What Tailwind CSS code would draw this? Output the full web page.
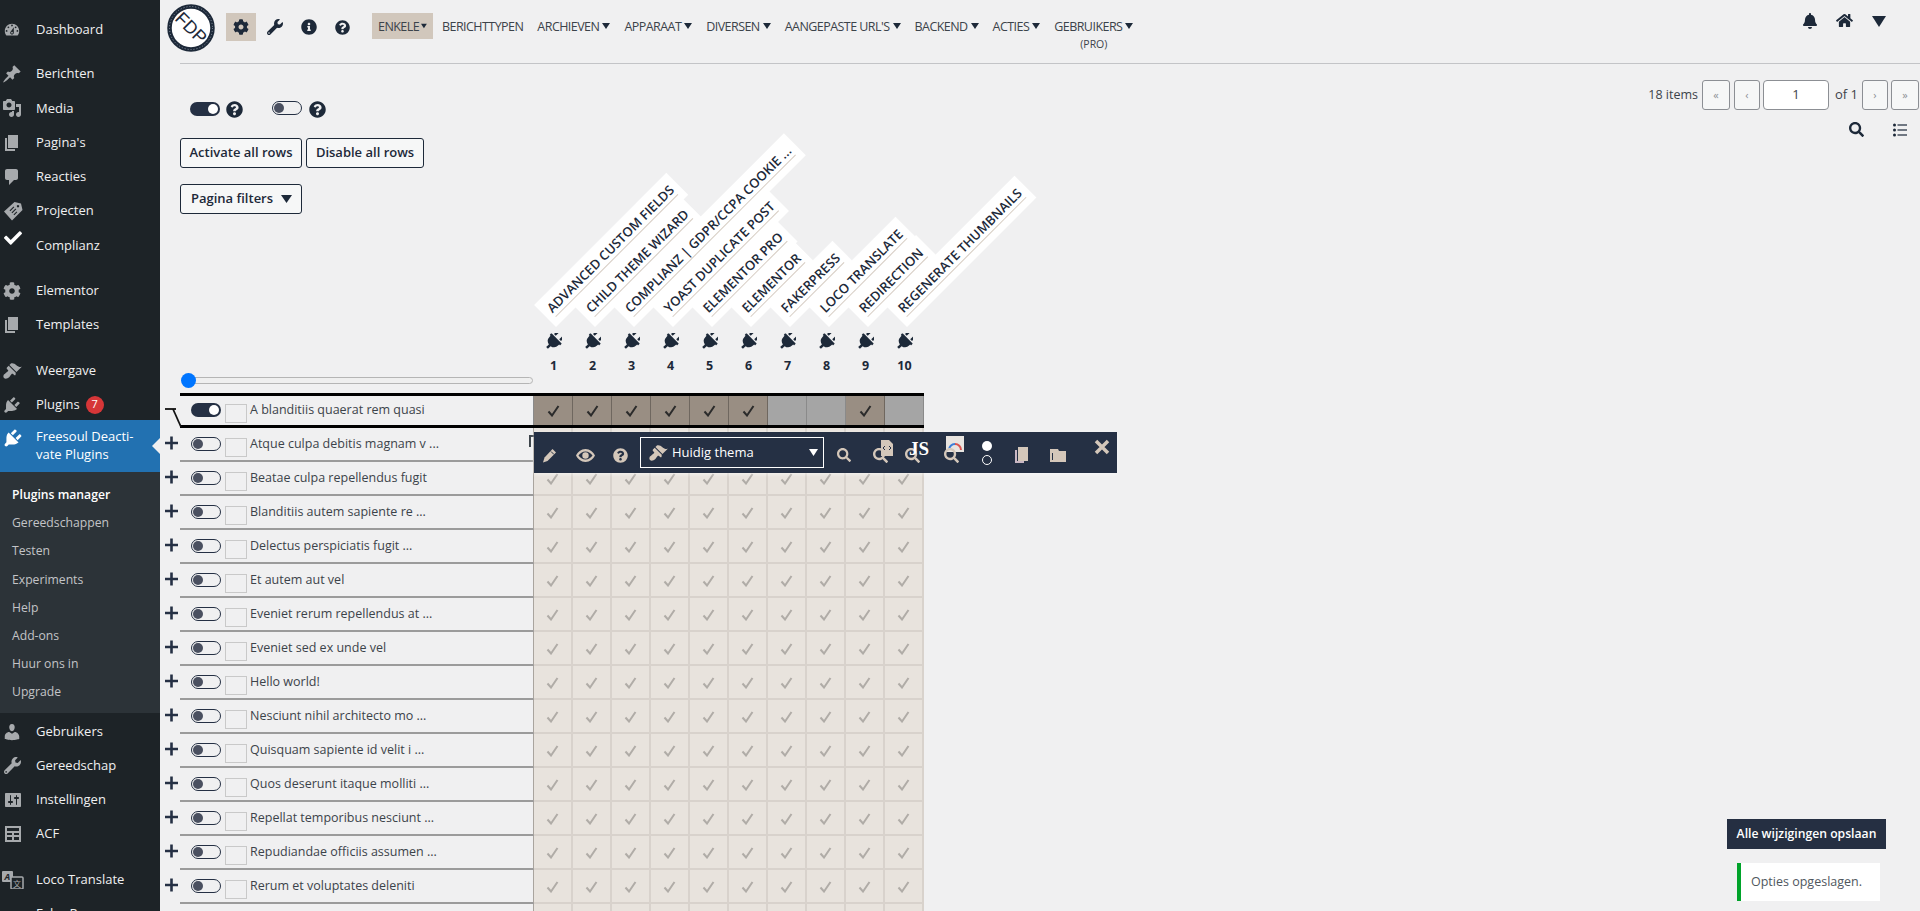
<!DOCTYPE html>
<html lang="nl">
<head>
  <meta charset="UTF-8" />
  <title>Freesoul Deactivate Plugins</title>
  <script src="https://cdn.jsdelivr.net/npm/@tailwindcss/browser@4"></script>
</head>
<body class="h-[911px] w-[1920px] overflow-hidden flex bg-[#f0f0f1] font-['Open_Sans',sans-serif] text-[13px] text-[#3c434a]">

  <svg class="hidden">
    <symbol id="plug" viewBox="48 48 416 416"><g transform="rotate(45 256 256) translate(64 0)"><path d="M320,32a32,32,0,0,0-64,0v96h64Zm48,128H16A16,16,0,0,0,0,176v32a16,16,0,0,0,16,16H32v32A160.07,160.07,0,0,0,160,412.8V512h64V412.8A160.07,160.07,0,0,0,352,256V224h16a16,16,0,0,0,16-16V176A16,16,0,0,0,368,160ZM128,32a32,32,0,0,0-64,0v96h64Z"/></g></symbol>
    <symbol id="cog" viewBox="0 0 512 512"><path d="M487.4 315.7l-42.6-24.6c4.3-23.2 4.3-47 0-70.2l42.6-24.6c4.9-2.8 7.1-8.6 5.5-14-11.1-35.6-30-67.8-54.7-94.6-3.8-4.1-10-5.1-14.8-2.3L380.8 110c-17.9-15.4-38.5-27.3-60.8-35.1V25.8c0-5.6-3.9-10.5-9.4-11.7-36.7-8.2-74.3-7.8-109.2 0-5.5 1.2-9.4 6.1-9.4 11.7V75c-22.2 7.9-42.8 19.8-60.8 35.1L88.7 85.5c-4.9-2.8-11-1.9-14.8 2.3-24.7 26.7-43.6 58.9-54.7 94.6-1.7 5.4.6 11.2 5.5 14L67.3 221c-4.3 23.2-4.3 47 0 70.2l-42.6 24.6c-4.9 2.8-7.1 8.6-5.5 14 11.1 35.6 30 67.8 54.7 94.6 3.8 4.1 10 5.1 14.8 2.3l42.6-24.6c17.9 15.4 38.5 27.3 60.8 35.1v49.2c0 5.6 3.9 10.5 9.4 11.7 36.7 8.2 74.3 7.8 109.2 0 5.5-1.2 9.4-6.1 9.4-11.7v-49.2c22.2-7.9 42.8-19.8 60.8-35.1l42.6 24.6c4.9 2.8 11 1.9 14.8-2.3 24.7-26.7 43.6-58.9 54.7-94.6 1.5-5.5-.7-11.3-5.6-14.1zM256 336c-44.1 0-80-35.9-80-80s35.9-80 80-80 80 35.9 80 80-35.9 80-80 80z"/></symbol>
    <symbol id="wrench" viewBox="0 0 512 512"><path d="M507.73 109.1c-2.24-9.03-13.54-12.09-20.12-5.51l-74.36 74.36-67.88-11.31-11.31-67.88 74.36-74.36c6.62-6.62 3.43-17.9-5.66-20.16-47.38-11.74-99.55.91-136.58 37.93-39.64 39.64-50.55 97.1-34.05 147.2L18.74 402.76c-24.99 24.99-24.99 65.51 0 90.5 24.99 24.99 65.51 24.99 90.5 0l213.21-213.21c50.12 16.71 107.47 5.68 147.37-34.22 37.07-37.07 49.7-89.32 37.91-136.73zM64 472c-13.25 0-24-10.75-24-24 0-13.26 10.75-24 24-24s24 10.74 24 24c0 13.25-10.75 24-24 24z"/></symbol>
    <symbol id="info" viewBox="0 0 512 512"><path d="M256 8C119.043 8 8 119.083 8 256c0 136.997 111.043 248 248 248s248-111.003 248-248C504 119.083 392.957 8 256 8zm0 110c23.196 0 42 18.804 42 42s-18.804 42-42 42-42-18.804-42-42 18.804-42 42-42zm56 254c0 6.627-5.373 12-12 12h-88c-6.627 0-12-5.373-12-12v-24c0-6.627 5.373-12 12-12h12v-64h-12c-6.627 0-12-5.373-12-12v-24c0-6.627 5.373-12 12-12h64c6.627 0 12 5.373 12 12v100h12c6.627 0 12 5.373 12 12v24z"/></symbol>
    <symbol id="help" viewBox="0 0 512 512"><path d="M504 256c0 136.997-111.043 248-248 248S8 392.997 8 256C8 119.083 119.043 8 256 8s248 111.083 248 248zM262.655 90c-54.497 0-89.255 22.957-116.549 63.758-3.536 5.286-2.353 12.415 2.715 16.258l34.699 26.31c5.205 3.947 12.621 3.008 16.665-2.122 17.864-22.658 30.113-35.797 57.303-35.797 20.429 0 45.698 13.148 45.698 32.958 0 14.976-12.363 22.667-32.534 33.976C247.128 238.528 216 254.941 216 296v4c0 6.627 5.373 12 12 12h56c6.627 0 12-5.373 12-12v-1.333c0-28.462 83.186-29.647 83.186-106.667 0-58.002-60.165-102-116.531-102zM256 338c-25.365 0-46 20.635-46 46 0 25.364 20.635 46 46 46s46-20.636 46-46c0-25.365-20.635-46-46-46z"/></symbol>
    <symbol id="search" viewBox="0 0 512 512"><path d="M505 442.7L405.3 343c-4.5-4.5-10.6-7-17-7H372c27.6-35.3 44-79.7 44-128C416 93.1 322.9 0 208 0S0 93.1 0 208s93.1 208 208 208c48.3 0 92.7-16.4 128-44v16.3c0 6.4 2.5 12.5 7 17l99.7 99.7c9.4 9.4 24.6 9.4 33.9 0l28.3-28.3c9.4-9.4 9.4-24.6.1-34zM208 336c-70.7 0-128-57.2-128-128 0-70.7 57.2-128 128-128 70.7 0 128 57.2 128 128 0 70.7-57.2 128-128 128z"/></symbol>
    <symbol id="bell" viewBox="0 0 448 512"><path d="M224 512c35.32 0 63.97-28.65 63.97-64H160.03c0 35.35 28.65 64 63.97 64zm215.39-149.71c-19.32-20.76-55.47-51.99-55.47-154.29 0-77.7-54.48-139.9-127.94-155.16V32c0-17.67-14.32-32-31.98-32s-31.98 14.33-31.98 32v20.84C118.56 68.1 64.08 130.3 64.08 208c0 102.3-36.15 133.53-55.47 154.29-6 6.45-8.66 14.16-8.61 21.71.11 16.4 12.98 32 32.1 32h383.8c19.12 0 32-15.6 32.1-32 .05-7.55-2.61-15.27-8.61-21.71z"/></symbol>
    <symbol id="home" viewBox="0 0 576 512"><path d="M280.37 148.26L96 300.11V464a16 16 0 0 0 16 16l112.06-.29a16 16 0 0 0 15.92-16V368a16 16 0 0 1 16-16h64a16 16 0 0 1 16 16v95.64a16 16 0 0 0 16 16.05L464 480a16 16 0 0 0 16-16V300L295.67 148.26a12.19 12.19 0 0 0-15.3 0zM571.6 251.47L488 182.56V44.05a12 12 0 0 0-12-12h-56a12 12 0 0 0-12 12v72.61L318.47 43a48 48 0 0 0-61 0L4.34 251.47a12 12 0 0 0-1.6 16.9l25.5 31A12 12 0 0 0 45.15 301l235.22-193.74a12.19 12.19 0 0 1 15.3 0L530.9 301a12 12 0 0 0 16.9-1.6l25.5-31a12 12 0 0 0-1.7-16.93z"/></symbol>
    <symbol id="check" viewBox="0 0 512 512"><path d="M173.898 439.404l-166.4-166.4c-9.997-9.997-9.997-26.206 0-36.204l36.203-36.204c9.997-9.998 26.207-9.998 36.204 0L192 312.69 432.095 72.596c9.997-9.997 26.207-9.997 36.204 0l36.203 36.204c9.997 9.997 9.997 26.206 0 36.204l-294.4 294.401c-9.998 9.997-26.207 9.997-36.204-.001z"/></symbol>
    <symbol id="gauge" viewBox="0 0 20 20"><path d="M3.76 16h12.48c1.1-1.37 1.76-3.11 1.76-5 0-4.42-3.58-8-8-8s-8 3.58-8 8c0 1.89.66 3.63 1.76 5zM10 4c.55 0 1 .45 1 1s-.45 1-1 1-1-.45-1-1 .45-1 1-1zM6 6c.55 0 1 .45 1 1s-.45 1-1 1-1-.45-1-1 .45-1 1-1zm8 0c.55 0 1 .45 1 1s-.45 1-1 1-1-.45-1-1 .45-1 1-1zm-5.37 5.55L12 7v6c0 1.1-.9 2-2 2s-2-.9-2-2c0-.57.24-1.08.63-1.45zM4 10c.55 0 1 .45 1 1s-.45 1-1 1-1-.45-1-1 .45-1 1-1zm12 0c.55 0 1 .45 1 1s-.45 1-1 1-1-.45-1-1 .45-1 1-1zm-5 3c0-.55-.45-1-1-1s-1 .45-1 1 .45 1 1 1 1-.45 1-1z"/></symbol>
    <symbol id="pin" viewBox="0 0 20 20"><path d="M10.44 3.02l1.82-1.82 6.36 6.35-1.83 1.82c-1.05-.68-2.48-.57-3.41.36l-.75.75c-.92.93-1.04 2.35-.35 3.41l-1.83 1.82-2.41-2.41-2.8 2.79c-.42.42-3.38 2.71-3.8 2.29s1.86-3.39 2.28-3.81l2.79-2.79L4.1 9.36l1.83-1.82c1.05.69 2.48.57 3.4-.36l.75-.75c.93-.92 1.05-2.35.36-3.41z"/></symbol>
    <symbol id="media" viewBox="0 0 20 20"><path d="M13 11V4c0-.55-.45-1-1-1h-1.67L9 1H5L3.67 3H2c-.55 0-1 .45-1 1v7c0 .55.45 1 1 1h10c.55 0 1-.45 1-1zM7 4.5c1.38 0 2.5 1.12 2.5 2.5S8.38 9.5 7 9.5 4.5 8.38 4.5 7 5.62 4.5 7 4.5zM14 6h5v10.5c0 1.38-1.12 2.5-2.5 2.5S14 17.88 14 16.5s1.12-2.5 2.5-2.5c.17 0 .34.02.5.05V9h-3V6zm-4 8.05V13h2v3.5c0 1.38-1.12 2.5-2.5 2.5S7 17.88 7 16.5 8.12 14 9.5 14c.17 0 .34.02.5.05z"/></symbol>
    <symbol id="page" viewBox="0 0 20 20"><path d="M6 15V2h10v13H6zm-1 1h8v2H3V5h2v11z"/></symbol>
    <symbol id="comment" viewBox="0 0 20 20"><path d="M5 2h9c1.1 0 2 .9 2 2v7c0 1.1-.9 2-2 2h-2l-5 5v-5H5c-1.1 0-2-.9-2-2V4c0-1.1.9-2 2-2z"/></symbol>
    <symbol id="tag" viewBox="0 0 20 20"><path fill-rule="evenodd" d="M1 10.5 11.5 1l6.5 1.5L19.5 9 9 19.5zM15 4a1.2 1.2 0 1 0 .01 0zM6.5 9.5l.8.8 4-4-.8-.8zM8.5 11.5l.8.8 4-4-.8-.8zM10.500 13.500l.8.8 3-3-.8-.8z"/></symbol>
    <symbol id="brush" viewBox="0 0 20 20"><path d="M14.48 11.06L7.41 3.99l1.5-1.5c.5-.56 2.3-.47 3.51.32 1.21.8 1.43 1.28 2.91 2.1 1.18.64 2.45 1.26 4.45.85zm-.71.71L6.7 4.7 4.93 6.47c-.39.39-.39 1.02 0 1.41l1.06 1.06c.39.39.39 1.03 0 1.42-.6.6-1.43 1.11-2.21 1.69-.35.26-.7.53-1.01.84C1.43 13.23.78 15.78 2 17s3.77.57 5.12-.78c.31-.31.58-.66.84-1.01.58-.78 1.09-1.61 1.69-2.21.39-.39 1.03-.39 1.42 0l1.06 1.06c.39.39 1.02.39 1.41 0z"/></symbol>
    <symbol id="wpplug" viewBox="0 0 20 20"><path d="M13.11 4.36L9.87 7.6 8 5.73l3.24-3.24c.35-.34 1.05-.2 1.56.32.52.51.66 1.21.31 1.55zm-8 1.77l.91-1.12 9.01 9.01-1.19.84c-.71.71-2.63 1.16-3.82 1.16H6.14L4.9 17.26c-.59.59-1.54.59-2.12 0-.59-.58-.59-1.53 0-2.12l1.24-1.24v-3.88c0-1.13.4-3.19 1.09-3.89zm7.26 3.97l3.24-3.24c.34-.35 1.04-.21 1.55.31.52.51.66 1.21.31 1.55l-3.24 3.25z"/></symbol>
    <symbol id="users" viewBox="0 0 20 20"><path d="M10 9.25c-2.27 0-2.73-3.44-2.73-3.44C7 4.02 7.82 2 9.97 2c2.16 0 2.98 2.02 2.71 3.81 0 0-.41 3.44-2.68 3.44zm0 2.57L12.72 10c2.39 0 4.52 2.33 4.52 4.53v2.49s-3.65 1.13-7.24 1.13c-3.65 0-7.24-1.13-7.24-1.13v-2.49c0-2.25 1.94-4.48 4.47-4.48z"/></symbol>
    <symbol id="sliders" viewBox="0 0 20 20"><path d="M18 16V4c0-.55-.45-1-1-1H3c-.55 0-1 .45-1 1v12c0 .55.45 1 1 1h14c.55 0 1-.45 1-1zM8 11h1c.55 0 1 .45 1 1s-.45 1-1 1H8v1.5c0 .28-.22.5-.5.5s-.5-.22-.5-.5V13H6c-.55 0-1-.45-1-1s.45-1 1-1h1V5.5c0-.28.22-.5.5-.5s.5.22.5.5V11zm5-2h-1c-.55 0-1-.45-1-1s.45-1 1-1h1V5.5c0-.28.22-.5.5-.5s.5.22.5.5V7h1c.55 0 1 .45 1 1s-.45 1-1 1h-1v5.5c0 .28-.22.5-.5.5s-.5-.22-.5-.5V9z"/></symbol>
    <symbol id="table" viewBox="0 0 20 20"><path fill-rule="evenodd" d="M2 2h16v16H2zM4 4v3h12V4zm0 5v2h5V9zm7 0v2h5V9zm-7 4v3h5v-3zm7 0v3h5v-3z"/></symbol>
  </svg>

  <!-- admin menu -->
  <aside class="w-[160px] h-[911px] shrink-0 bg-[#1d2327] overflow-hidden pt-[13px] text-[#f0f0f1]">
    <a class="flex items-center h-[34px]"><svg class="w-[18px] h-[18px] ml-[3px] mr-[15px] fill-[#a7aaad]"><use href="#gauge"/></svg>Dashboard</a>
    <a class="flex items-center h-[34px] mt-[10px]"><svg class="w-[20px] h-[20px] ml-[2px] mr-[14px] fill-[#a7aaad]"><use href="#pin"/></svg>Berichten</a>
    <a class="flex items-center h-[34.500px]"><svg class="w-[20px] h-[20px] ml-[2px] mr-[14px] fill-[#a7aaad]"><use href="#media"/></svg>Media</a>
    <a class="flex items-center h-[34.500px]"><svg class="w-[20px] h-[20px] ml-[2px] mr-[14px] fill-[#a7aaad]"><use href="#page"/></svg>Pagina's</a>
    <a class="flex items-center h-[34px]"><svg class="w-[20px] h-[20px] ml-[2px] mr-[14px] fill-[#a7aaad]"><use href="#comment"/></svg>Reacties</a>
    <a class="flex items-center h-[34px]"><svg class="w-[20px] h-[20px] ml-[3px] mr-[13px] fill-[#a7aaad]"><use href="#tag"/></svg>Projecten</a>
    <a class="flex items-center h-[34.500px]"><svg class="w-[18px] h-[18px] ml-[4px] mr-[14px] mt-[-14px] fill-white"><use href="#check"/></svg>Complianz</a>
    <a class="flex items-center h-[34px] mt-[11px]"><svg class="w-[18px] h-[18px] ml-[3px] mr-[15px] fill-[#a7aaad]"><use href="#cog"/></svg>Elementor</a>
    <a class="flex items-center h-[34px]"><svg class="w-[20px] h-[20px] ml-[2px] mr-[14px] fill-[#a7aaad]"><use href="#page"/></svg>Templates</a>
    <a class="flex items-center h-[34px] mt-[12px]"><svg class="w-[20px] h-[20px] ml-[2px] mr-[14px] fill-[#a7aaad]"><use href="#brush"/></svg>Weergave</a>
    <a class="flex items-center h-[34px]"><svg class="w-[20px] h-[20px] ml-[2px] mr-[14px] fill-[#a7aaad]"><use href="#wpplug"/></svg>Plugins<span class="ml-[6px] w-[18px] h-[18px] rounded-full bg-[#d63638] text-white text-[11px] flex items-center justify-center">7</span></a>
    <a class="relative flex h-[52px] bg-[#2271b1] text-white mt-[-1.500px]">
      <svg class="w-[22px] h-[22px] ml-[2px] mt-[7px] mr-[12px] fill-white shrink-0"><use href="#wpplug"/></svg>
      <span class="leading-[18px] pt-[7px]">Freesoul Deacti-<br>vate Plugins</span>
      <span class="absolute right-0 top-[18px] border-y-[8px] border-r-[8px] border-y-transparent border-r-[#f0f0f1]"></span>
    </a>
    <div class="bg-[#2c3338] pt-[9px] pb-[6px] text-[#c3c4c7] text-[12.200px]">
      <a class="flex items-center h-[28.200px] pl-[12px] font-semibold text-white">Plugins manager</a>
      <a class="flex items-center h-[28.200px] pl-[12px]">Gereedschappen</a>
      <a class="flex items-center h-[28.200px] pl-[12px]">Testen</a>
      <a class="flex items-center h-[28.200px] pl-[12px]">Experiments</a>
      <a class="flex items-center h-[28.200px] pl-[12px]">Help</a>
      <a class="flex items-center h-[28.200px] pl-[12px]">Add-ons</a>
      <a class="flex items-center h-[28.200px] pl-[12px]">Huur ons in</a>
      <a class="flex items-center h-[28.200px] pl-[12px]">Upgrade</a>
    </div>
    <a class="flex items-center h-[34px] mt-[2px]"><svg class="w-[20px] h-[20px] ml-[2px] mr-[14px] fill-[#a7aaad]"><use href="#users"/></svg>Gebruikers</a>
    <a class="flex items-center h-[34px]"><svg class="w-[17px] h-[17px] ml-[4px] mr-[15px] fill-[#a7aaad]"><use href="#wrench"/></svg>Gereedschap</a>
    <a class="flex items-center h-[34px]"><svg class="w-[20px] h-[20px] ml-[3px] mr-[13px] fill-[#a7aaad]"><use href="#sliders"/></svg>Instellingen</a>
    <a class="flex items-center h-[34.500px]"><svg class="w-[20px] h-[20px] ml-[3px] mr-[13px] fill-[#a7aaad]"><use href="#table"/></svg>ACF</a>
    <a class="flex items-center h-[34px] mt-[11.500px]">
      <svg class="w-[22px] h-[18px] ml-[2px] mr-[12px]" viewBox="0 0 22 18"><rect x="0" y="0" width="11" height="11" rx="1" fill="#a7aaad"/><text x="2.500" y="9" font-size="9" font-weight="700" font-style="italic" fill="#1d2327">A</text><rect x="9" y="6" width="12" height="12" rx="1" fill="#1d2327" stroke="#a7aaad" stroke-width="1.500"/><text x="11" y="15.500" font-size="8" fill="#a7aaad" font-family="Noto Sans CJK SC">文</text></svg>
      Loco Translate</a>
    <a class="flex items-center h-[34px] pl-[36px]">FakerPress</a>
  </aside>

  <main class="relative flex-1 h-[911px] overflow-hidden">
    <!-- top bar -->
    <header class="flex h-[63px] pl-[7px]">
      <svg class="w-[48px] h-[48px] mt-[4px] shrink-0" viewBox="0 0 48 48">
        <circle cx="24" cy="24" r="21.500" fill="#fff" stroke="#1d2939" stroke-width="4.500"/>
        <circle cx="24" cy="24" r="21.500" fill="none" stroke="#8d97a6" stroke-width="1" stroke-dasharray="1 2"/>
        <text x="24" y="30" text-anchor="middle" font-size="18" font-family="Liberation Sans" fill="#1d2939" transform="rotate(45 24 24)">FDP</text>
      </svg>
      <div class="ml-[11px] mt-[13px] w-[30px] h-[28px] bg-[#d1c7bc] flex items-center justify-center"><svg class="w-[16px] h-[16px] fill-[#1d2939]"><use href="#cog"/></svg></div>
      <div class="ml-[2.500px] mt-[13px] w-[33.500px] h-[28px] flex items-center justify-center"><svg class="w-[16px] h-[16px] fill-[#1d2939]"><use href="#wrench"/></svg></div>
      <div class="mt-[13px] w-[33.500px] h-[28px] flex items-center justify-center"><svg class="w-[16px] h-[16px] fill-[#1d2939]"><use href="#info"/></svg></div>
      <div class="mt-[13px] w-[33.500px] h-[28px] flex items-center justify-center"><svg class="w-[15px] h-[15px] fill-[#1d2939]"><use href="#help"/></svg></div>
      <nav class="ml-[13px] mt-[13px] flex items-start gap-[14px] text-[12.500px] leading-[26px] tracking-[-0.55px] text-[#3c434a]">
        <a class="flex items-center h-[26px] pt-[2px] px-[6px] w-[61px] bg-[#d1c7bc] mr-[-5px]">ENKELE<svg class="w-[8px] h-[6px] ml-[2px] mb-[2px] fill-[#1d2939]" viewBox="0 0 8 6"><path d="M0 0h8L4 6z"/></svg></a>
        <a class="flex items-center h-[26px] pt-[2px]">BERICHTTYPEN</a>
        <a class="flex items-center h-[26px] pt-[2px]">ARCHIEVEN<svg class="w-[8px] h-[6px] ml-[3px] mb-[2px] fill-[#1d2939]" viewBox="0 0 8 6"><path d="M0 0h8L4 6z"/></svg></a>
        <a class="flex items-center h-[26px] pt-[2px]">APPARAAT<svg class="w-[8px] h-[6px] ml-[3px] mb-[2px] fill-[#1d2939]" viewBox="0 0 8 6"><path d="M0 0h8L4 6z"/></svg></a>
        <a class="flex items-center h-[26px] pt-[2px]">DIVERSEN<svg class="w-[8px] h-[6px] ml-[3px] mb-[2px] fill-[#1d2939]" viewBox="0 0 8 6"><path d="M0 0h8L4 6z"/></svg></a>
        <a class="flex items-center h-[26px] pt-[2px]">AANGEPASTE URL'S<svg class="w-[8px] h-[6px] ml-[3px] mb-[2px] fill-[#1d2939]" viewBox="0 0 8 6"><path d="M0 0h8L4 6z"/></svg></a>
        <a class="flex items-center h-[26px] pt-[2px]">BACKEND<svg class="w-[8px] h-[6px] ml-[3px] mb-[2px] fill-[#1d2939]" viewBox="0 0 8 6"><path d="M0 0h8L4 6z"/></svg></a>
        <a class="flex items-center h-[26px] pt-[2px]">ACTIES<svg class="w-[8px] h-[6px] ml-[3px] mb-[2px] fill-[#1d2939]" viewBox="0 0 8 6"><path d="M0 0h8L4 6z"/></svg></a>
        <a class="flex flex-col items-center">
          <span class="flex items-center h-[26px] pt-[2px]">GEBRUIKERS<svg class="w-[8px] h-[6px] ml-[3px] mb-[2px] fill-[#1d2939]" viewBox="0 0 8 6"><path d="M0 0h8L4 6z"/></svg></span>
          <span class="leading-[11px] text-[10.500px] tracking-normal">(PRO)</span>
        </a>
      </nav>
      <div class="ml-auto mr-[34px] mt-[13px] flex items-start gap-[19px] fill-[#1d2939]">
        <svg class="w-[14px] h-[16px]"><use href="#bell"/></svg>
        <svg class="w-[17px] h-[15px]"><use href="#home"/></svg>
        <svg class="w-[14px] h-[11px] mt-[3px]" viewBox="0 0 14 11"><path d="M0 0h14L7 11z"/></svg>
      </div>
    </header>
    <div class="ml-[20px] h-px bg-[#c3c4c7]"></div>

    <section class="flex justify-between">
      <!-- left controls -->
      <div class="pl-[20px] pt-[36px]">
        <div class="flex items-center pl-[10px] h-[16px]">
          <span class="relative w-[30px] h-[14px] rounded-full bg-[#253044] mt-[2px]"><span class="absolute right-[2px] top-[2px] w-[10px] h-[10px] rounded-full bg-white"></span></span>
          <svg class="w-[17px] h-[17px] ml-[6px] fill-[#1d2939] mt-[2px]"><use href="#help"/></svg>
          <span class="relative w-[30px] h-[14px] ml-[29px] rounded-full border border-[#253044] mt-[-1px]"><span class="absolute left-[1px] top-[1px] w-[10px] h-[10px] rounded-full bg-[#4a5060]"></span></span>
          <svg class="w-[17px] h-[17px] ml-[7px] fill-[#1d2939] mt-[2px]"><use href="#help"/></svg>
        </div>
        <div class="flex gap-[4px] mt-[22px] font-semibold text-[#1d2939]">
          <button class="h-[30px] w-[122px] rounded-[3px] border border-[#1d2939] bg-[#f6f7f7] font-semibold">Activate all rows</button>
          <button class="h-[30px] w-[118px] rounded-[3px] border border-[#1d2939] bg-[#f6f7f7] font-semibold">Disable all rows</button>
        </div>
        <button class="flex items-center justify-between mt-[16px] h-[30px] w-[122px] pl-[10px] pr-[9px] rounded-[3px] border border-[#1d2939] bg-[#f6f7f7] font-semibold text-[#1d2939]">Pagina filters<svg class="w-[11px] h-[8px] fill-[#1d2939]" viewBox="0 0 11 8"><path d="M0 0h11L5.500 8z"/></svg></button>
      </div>
      <!-- pagination -->
      <div class="pt-[16px] flex flex-col items-end">
        <div class="flex items-center h-[30px]">
          <span class="mr-[4px] text-[12.500px]">18 items</span>
          <span class="w-[28px] h-[30px] rounded-[3px] border border-[#8c8f94] bg-[#f6f7f7] flex items-center justify-center text-[11px] text-[#8c8f94] mr-[4px]">«</span>
          <span class="w-[26px] h-[30px] rounded-[3px] border border-[#8c8f94] bg-[#f6f7f7] flex items-center justify-center text-[11px] text-[#8c8f94] mr-[3px]">‹</span>
          <span class="w-[66px] h-[30px] rounded-[4px] border border-[#8c8f94] bg-white flex items-center justify-center">1</span>
          <span class="ml-[6px] mr-[4px] text-[13px]">of 1</span>
          <span class="w-[26px] h-[30px] rounded-[3px] border border-[#8c8f94] bg-[#f6f7f7] flex items-center justify-center text-[11px] text-[#8c8f94] mr-[3px]">›</span>
          <span class="w-[28px] h-[30px] rounded-[3px] border border-[#8c8f94] bg-[#f6f7f7] flex items-center justify-center text-[11px] text-[#8c8f94] mr-[1px]">»</span>
        </div>
        <div class="flex items-center mt-[12px] mr-[13px] gap-[29px]">
          <svg class="w-[15px] h-[15px] fill-[#1d2939]"><use href="#search"/></svg>
          <svg class="w-[14px] h-[14px] fill-[#1d2939]" viewBox="0 0 14 14"><circle cx="1.500" cy="2" r="1.500"/><circle cx="1.500" cy="7" r="1.500"/><circle cx="1.500" cy="12" r="1.500"/><rect x="4.500" y="1.400" width="9.500" height="1.200"/><rect x="4.500" y="6.400" width="9.500" height="1.200"/><rect x="4.500" y="11.400" width="9.500" height="1.200"/></svg>
        </div>
      </div>
    </section>

    <!-- plugin columns -->
    <div id="cols" class="flex pl-[374px] mt-[119px]"></div>

    <!-- column width slider -->
    <div class="relative ml-[21px] mt-[-2px] w-[352px] h-[15px] flex items-center">
      <div class="w-full h-[7px] ml-[7px] rounded-full border border-[#b5b5b5] bg-[#efefef]"></div>
      <div class="absolute left-0 top-0 w-[15px] h-[15px] rounded-full bg-[#0075ff]"></div>
    </div>

    <div id="rows" class="mt-[5px]"></div>

    <svg class="absolute left-[4px] top-[407px] w-[22px] h-[22px]" viewBox="0 0 22 22" fill="none" stroke="#111" stroke-width="1.800"><path d="M1 2h11"/><path d="M9 2l8 18"/></svg>
    <span class="absolute left-[369px] top-[435px] w-[5px] h-[12px] border-l-2 border-t-2 border-[#3c434a]"></span>

    <!-- row tools -->
    <div class="absolute left-[374px] top-[432px] w-[583px] h-[41px] bg-[#253044] flex items-center text-[#d4c7ba] fill-[#d4c7ba] shadow-[0_1px_4px_rgba(255,255,255,0.6)]">
      <span class="w-[30px] flex justify-center mt-[5px]">
        <svg class="w-[15px] h-[15px]" viewBox="0 0 15 15"><path d="M10.500 1l3.500 3.500-8.500 8.500L1 14.500l1.500-5z"/><path d="M9 3.500l3 3" stroke="#253044"/></svg>
      </span>
      <span class="w-[42px] flex justify-center mt-[5px]">
        <svg class="w-[19px] h-[13px]" viewBox="0 0 19 13"><path d="M9.500 0C5 0 1.800 3 0 6.500 1.800 10 5 13 9.500 13s7.700-3 9.500-6.500C17.200 3 14 0 9.500 0zm0 2.500c3 0 5.500 1.700 7 4-1.500 2.300-4 4-7 4s-5.500-1.700-7-4c1.500-2.300 4-4 7-4z"/><circle cx="9.500" cy="6.500" r="3.200"/></svg>
      </span>
      <span class="w-[28px] flex justify-center mt-[5px]"><svg class="w-[15px] h-[15px]"><use href="#help"/></svg></span>
      <div class="ml-[6px] w-[184px] h-[31px] border border-white flex items-center">
        <svg class="w-[20px] h-[20px] ml-[7px]"><use href="#brush"/></svg>
        <span class="ml-[4px] text-white text-[13px]">Huidig thema</span>
        <svg class="w-[9px] h-[7px] ml-auto mr-[5px] fill-white" viewBox="0 0 9 7"><path d="M0 0h9L4.500 7z"/></svg>
      </div>
      <span class="w-[40px] flex justify-center mt-[4px]"><svg class="w-[14px] h-[14px]"><use href="#search"/></svg></span>
      <svg class="w-[32px] h-[41px]" viewBox="0 0 32 41"><path d="M17 8h8l4 4v12H17z"/><path d="M21 14l-2 2 2 2M25 14l2 2-2 2" fill="none" stroke="#253044" stroke-width="1"/><use href="#search" x="9" y="16" width="15" height="15"/></svg>
      <svg class="w-[44px] h-[41px]" viewBox="0 0 44 41"><use href="#search" x="9" y="16" width="15" height="15"/><text x="13" y="23" font-size="19" font-weight="700" font-family="Liberation Serif" fill="#fff">JS</text></svg>
      <svg class="w-[26px] h-[41px]" viewBox="0 0 26 41"><rect x="6" y="4" width="18" height="16" fill="#e8e4e0"/><path d="M9 18a6 6 0 0 1 6-6" fill="none" stroke="#3b7dd8" stroke-width="2"/><path d="M15 12a6 6 0 0 1 6 6" fill="none" stroke="#d9534f" stroke-width="2"/><use href="#search" x="4" y="16" width="15" height="15"/></svg>
      <svg class="w-[42px] h-[41px]" viewBox="0 0 42 41"><circle cx="21" cy="14" r="5" fill="#fff"/><circle cx="21" cy="28" r="4.500" fill="none" stroke="#fff" stroke-width="1"/></svg>
      <svg class="w-[32px] h-[41px]" viewBox="0 0 32 41"><path d="M7 18h2v11h7v2H7z" fill="#c9b7c4"/><rect x="10" y="15" width="10" height="14"/></svg>
      <svg class="w-[40px] h-[41px]" viewBox="0 0 40 41"><path d="M10 17h8l1 2h7v11H10zM12 20v8h12v-7H12z" fill-rule="evenodd"/><rect x="13" y="21" width="13" height="9"/></svg>
      <svg class="w-[37px] h-[41px]" viewBox="0 0 37 41"><path d="M16 9l12 12M28 9L16 21" stroke="#d4c7ba" stroke-width="3.500" fill="none"/></svg>
    </div>

    <!-- save + notice -->
    <button class="absolute left-[1567px] top-[819px] w-[159px] h-[30px] bg-[#252f42] text-white text-[12.200px] font-semibold">Alle wijzigingen opslaan</button>
    <div class="absolute left-[1577px] top-[863px] w-[143px] h-[38px] bg-white border-l-4 border-[#00a32a] pl-[10px] flex items-center text-[12.500px] text-[#50575e]">Opties opgeslagen.</div>
  </main>

  <script>
    const plugins = ['Advanced Custom Fields', 'Child Theme Wizard', 'Complianz | GDPR/CCPA Cookie ...', 'Yoast Duplicate Post', 'Elementor Pro', 'Elementor', 'FakerPress', 'Loco Translate', 'Redirection', 'Regenerate Thumbnails'];
    const rows = ['A blanditiis quaerat rem quasi', 'Atque culpa debitis magnam v ...', 'Beatae culpa repellendus fugit', 'Blanditiis autem sapiente re ...', 'Delectus perspiciatis fugit ...', 'Et autem aut vel', 'Eveniet rerum repellendus at ...', 'Eveniet sed ex unde vel', 'Hello world!', 'Nesciunt nihil architecto mo ...', 'Quisquam sapiente id velit i ...', 'Quos deserunt itaque molliti ...', 'Repellat temporibus nesciunt ...', 'Repudiandae officiis assumen ...', 'Rerum et voluptates deleniti', 'Sit ratione quasi'];
    const activeCols = [0, 1, 2, 3, 4, 5, 8];

    document.getElementById('cols').innerHTML = plugins.map((name, i) => `
      <div class="w-[39px] flex flex-col items-center font-semibold text-[#1d2939]">
        <div class="relative w-full h-[16px] flex justify-center">
          <svg class="w-[16px] h-[16px] fill-[#1d2939]"><use href="#plug"/></svg>
          <div class="absolute left-[22px] bottom-[22px] origin-bottom-left -rotate-45 bg-white p-[7px] whitespace-nowrap z-0">
            <div class="pb-[2px] border-b border-[#d5cbc1] text-[13px] leading-[14px] uppercase">${name}</div>
          </div>
        </div>
        <div class="mt-[8px] text-[12.500px] font-bold leading-[18px]">${i + 1}</div>
      </div>`).join('');

    document.getElementById('rows').innerHTML = rows.map((name, r) => {
      const open = r === 0;
      const cells = plugins.map((p, c) => {
        if (open && activeCols.includes(c)) {
          return `<div class="w-[39px] h-full bg-[#998e83] border-r border-[#6f675f] flex items-center justify-center"><svg class="w-[13px] h-[12px]" viewBox="0 0 13 12" fill="none" stroke="#2b2b2b" stroke-width="2"><path d="M1.500 6.500l3.500 4L11.500 1"/></svg></div>`;
        }
        if (open) {
          return `<div class="w-[39px] h-full bg-[#a5a5a5] border-r border-[#8a8a8a]"></div>`;
        }
        return `<div class="w-[39px] h-full pt-[2px] bg-[#e8e3dd] border-r-2 border-b-2 border-[#d8d2cc] flex items-center justify-center"><svg class="w-[13px] h-[12px]" viewBox="0 0 13 12" fill="none" stroke="#b0aca7" stroke-width="2"><path d="M1.500 6.500l3.500 4L11.500 1"/></svg></div>`;
      }).join('');
      const toggle = open
        ? `<span class="relative shrink-0 w-[30px] h-[14px] rounded-full bg-[#253044]"><span class="absolute right-[2px] top-[2px] w-[10px] h-[10px] rounded-full bg-white"></span></span>`
        : `<span class="relative shrink-0 w-[30px] h-[14px] rounded-full border border-[#253044]"><span class="absolute left-[1px] top-[1px] w-[10px] h-[10px] rounded-full bg-[#4a5060]"></span></span>`;
      const rowClass = open ? 'h-[35px] w-[744px] border-y-[3px] border-black ml-[20px]' : 'h-[34px]';
      const nameClass = open ? 'w-[354px] pt-[7px] border-r border-[#8a8a8a]' : 'w-[354px] pt-[9px] border-b-2 border-r border-b-[#9b9b9b] border-r-[#a9a49e]';
      const plus = open ? '' : `<svg class="w-[20px] h-[14px] mt-[8px] shrink-0" viewBox="0 0 20 14"><path d="M5 5.700h5.200V.500h2.600v5.200H18v2.600h-5.200v5.200h-2.600V8.300H5z" fill="#253044"/></svg>`;
      return `<div class="flex ${rowClass}">${plus}
        <div class="flex items-start pl-[11px] ${nameClass}">${toggle}
          <span class="shrink-0 ml-[4px] mt-[1px] w-[22px] h-[19px] border border-[#c9c9c9]"></span>
          <span class="ml-[3px] whitespace-nowrap text-[12.500px] leading-[14px]">${name}</span>
        </div>${cells}</div>`;
    }).join('');
  </script>
</body>
</html>
